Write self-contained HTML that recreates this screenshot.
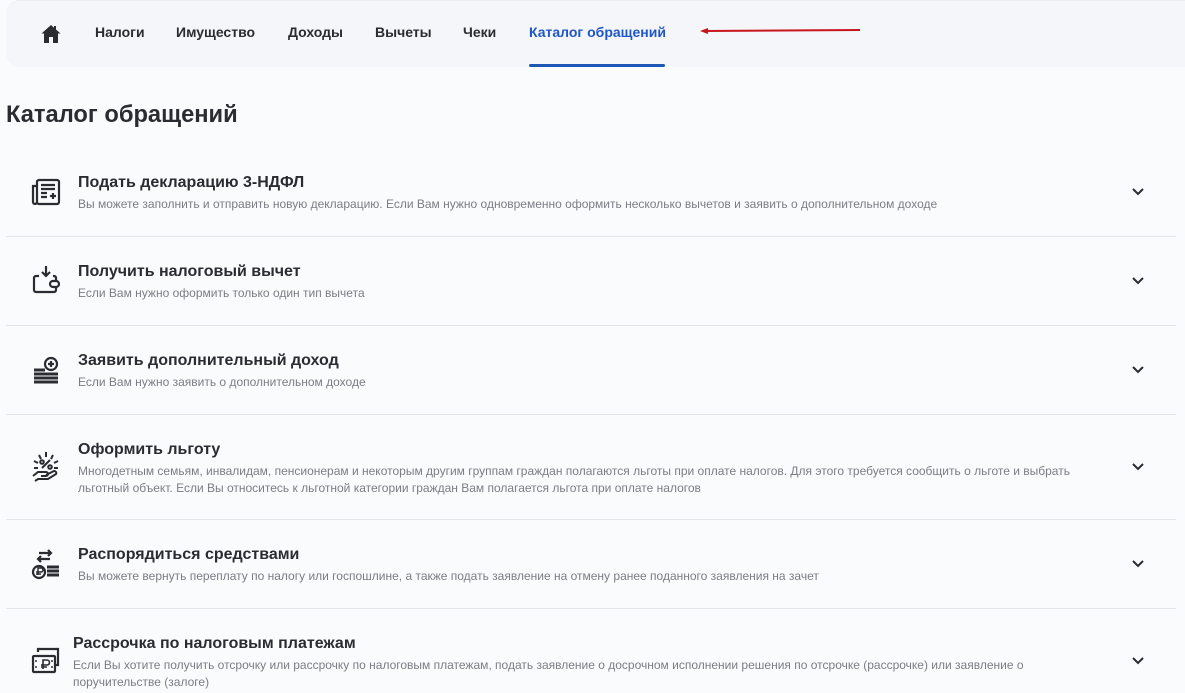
<!DOCTYPE html>
<html><head><meta charset="utf-8"><style>
*{margin:0;padding:0;box-sizing:border-box}
body{width:1185px;height:693px;overflow:hidden;background:#fafbfd;font-family:"Liberation Sans","DejaVu Sans",sans-serif;color:#2a2c31;position:relative}
.nav{position:absolute;left:6px;top:0;width:1185px;height:67px;background:#f4f6fa;border-radius:14px 0 0 14px;border-top:1px solid #eceef3}
.nav a{position:absolute;top:23px;font-size:14px;font-weight:bold;color:#2a2c31;text-decoration:none}
.ul{position:absolute;left:529px;top:64px;width:136px;height:3px;background:#1f57b4;border-radius:2px}
h1{position:absolute;left:6px;top:102px;font-size:23.7px;font-weight:bold;color:#2a2c31}
.t{position:absolute;font-size:16px;font-weight:bold;color:#2a2c31}
.d{position:absolute;font-size:12px;color:#7a7d84;line-height:17px}
.hr{position:absolute;left:6px;width:1170px;height:1px;background:#e3e5ea}
.ic{position:absolute;left:30px;width:32px;height:32px}
.ch{position:absolute;left:1131px;width:14px;height:10px}
</style></head><body>
<div class="nav">
<svg style="position:absolute;left:34px;top:22px" width="22" height="22" viewBox="0 0 22 22"><path d="M11 2 L1.5 10.5 L4 10.5 L4 20 L18 20 L18 10.5 L20.5 10.5 L16 6.5 L16 3 L14 3 L14 4.7 Z" fill="#2a2c31"/><rect x="9" y="14" width="4" height="6" fill="#f4f6fa"/></svg>
<a style="left:89px">Налоги</a>
<a style="left:170px">Имущество</a>
<a style="left:282px">Доходы</a>
<a style="left:369px">Вычеты</a>
<a style="left:457px">Чеки</a>
<a style="left:523px;color:#1f57c8">Каталог обращений</a>
</div>
<div class="ul"></div>
<svg style="position:absolute;left:700px;top:27px" width="162" height="8"><path d="M4 4 L160 3" stroke="#c8141b" stroke-width="2"/><path d="M0 4 L8 1 L8 7 Z" fill="#c8141b"/></svg>
<h1>Каталог обращений</h1>

<svg class="ic" style="top:176px" viewBox="0 0 32 32" fill="none" stroke="#2a2c31" stroke-width="2.2"><rect x="7" y="4" width="22" height="24" rx="2"/><path d="M7 10H3v16a2 2 0 0 0 4 0"/><path d="M11 9h14M11 13h14M11 17h6M11 21h6M20 20h6M23 17v6"/></svg>
<div class="t" style="left:78px;top:174px">Подать декларацию 3-НДФЛ</div>
<div class="d" style="left:78px;top:196px">Вы можете заполнить и отправить новую декларацию. Если Вам нужно одновременно оформить несколько вычетов и заявить о дополнительном доходе</div>
<svg class="ch" style="top:187px" viewBox="0 0 14 10"><path d="M2 2l5 5 5-5" stroke="#2a2c31" stroke-width="2" fill="none"/></svg>
<div class="hr" style="top:236px"></div>

<svg class="ic" style="top:264px" viewBox="0 0 32 32" fill="none" stroke="#2a2c31" stroke-width="2.2"><path d="M16 2v10M12 8l4 4 4-4"/><path d="M9 12H6a2 2 0 0 0-2 2v12a2 2 0 0 0 2 2h18a2 2 0 0 0 2-2v-3M23 12h1a2 2 0 0 1 2 2v3"/><rect x="20" y="17" width="9" height="6" rx="3"/></svg>
<div class="t" style="left:78px;top:263px">Получить налоговый вычет</div>
<div class="d" style="left:78px;top:285px">Если Вам нужно оформить только один тип вычета</div>
<svg class="ch" style="top:276px" viewBox="0 0 14 10"><path d="M2 2l5 5 5-5" stroke="#2a2c31" stroke-width="2" fill="none"/></svg>
<div class="hr" style="top:325px"></div>

<svg class="ic" style="top:354px" viewBox="0 0 32 32" fill="none" stroke="#2a2c31" stroke-width="2.2"><circle cx="21" cy="10" r="6"/><path d="M21 7v6M18 10h6"/><path d="M4 16h11M4 20h24M4 24h24M4 28h24" stroke-width="3"/></svg>
<div class="t" style="left:78px;top:352px">Заявить дополнительный доход</div>
<div class="d" style="left:78px;top:374px">Если Вам нужно заявить о дополнительном доходе</div>
<svg class="ch" style="top:365px" viewBox="0 0 14 10"><path d="M2 2l5 5 5-5" stroke="#2a2c31" stroke-width="2" fill="none"/></svg>
<div class="hr" style="top:414px"></div>

<svg class="ic" style="top:450px" viewBox="0 0 32 32" fill="none" stroke="#2a2c31" stroke-width="2"><path d="M16 2v5M9 5l2 4M23 5l-2 4M4 11l4 2M28 11l-4 2M4 18h4M24 18h4"/><path d="M12 18l8-8"/><circle cx="12" cy="12" r="1.8"/><circle cx="20" cy="17" r="1.8"/><path d="M3 26l5-4h8a2 2 0 0 1 0 4h-5M16 25l8-4a2 2 0 0 1 2 3l-8 5H8l-3 2"/></svg>
<div class="t" style="left:78px;top:441px">Оформить льготу</div>
<div class="d" style="left:78px;top:463px">Многодетным семьям, инвалидам, пенсионерам и некоторым другим группам граждан полагаются льготы при оплате налогов. Для этого требуется сообщить о льготе и выбрать<br>льготный объект. Если Вы относитесь к льготной категории граждан Вам полагается льгота при оплате налогов</div>
<svg class="ch" style="top:462px" viewBox="0 0 14 10"><path d="M2 2l5 5 5-5" stroke="#2a2c31" stroke-width="2" fill="none"/></svg>
<div class="hr" style="top:519px"></div>

<svg class="ic" style="top:548px" viewBox="0 0 32 32" fill="none" stroke="#2a2c31" stroke-width="2.2"><path d="M9 5h12M18 2l3 3-3 3M20 11H8M11 8l-3 3 3 3"/><circle cx="9" cy="24" r="6"/><path d="M8 27v-7h3a2 2 0 0 1 0 4H6M6 26h5"  stroke-width="1.5"/><path d="M17 19h12M17 23h12M17 27h12" stroke-width="3"/></svg>
<div class="t" style="left:78px;top:546px">Распорядиться средствами</div>
<div class="d" style="left:78px;top:568px">Вы можете вернуть переплату по налогу или госпошлине, а также подать заявление на отмену ранее поданного заявления на зачет</div>
<svg class="ch" style="top:559px" viewBox="0 0 14 10"><path d="M2 2l5 5 5-5" stroke="#2a2c31" stroke-width="2" fill="none"/></svg>
<div class="hr" style="top:608px"></div>

<svg class="ic" style="top:644px" viewBox="0 0 32 32" fill="none" stroke="#2a2c31" stroke-width="2.2"><path d="M8 8V5h20v16h-3"/><rect x="3" y="12" width="22" height="16" rx="1"/><path d="M13 25v-9h4a2 2 0 0 1 0 5h-6M11 23h6" stroke-width="1.6"/><path d="M6 16v2M6 22v2M22 16v2M22 22v2" stroke-width="1.5"/></svg>
<div class="t" style="left:73px;top:635px">Рассрочка по налоговым платежам</div>
<div class="d" style="left:73px;top:657px">Если Вы хотите получить отсрочку или рассрочку по налоговым платежам, подать заявление о досрочном исполнении решения по отсрочке (рассрочке) или заявление о<br>поручительстве (залоге)</div>
<svg class="ch" style="top:656px" viewBox="0 0 14 10"><path d="M2 2l5 5 5-5" stroke="#2a2c31" stroke-width="2" fill="none"/></svg>
</body></html>
